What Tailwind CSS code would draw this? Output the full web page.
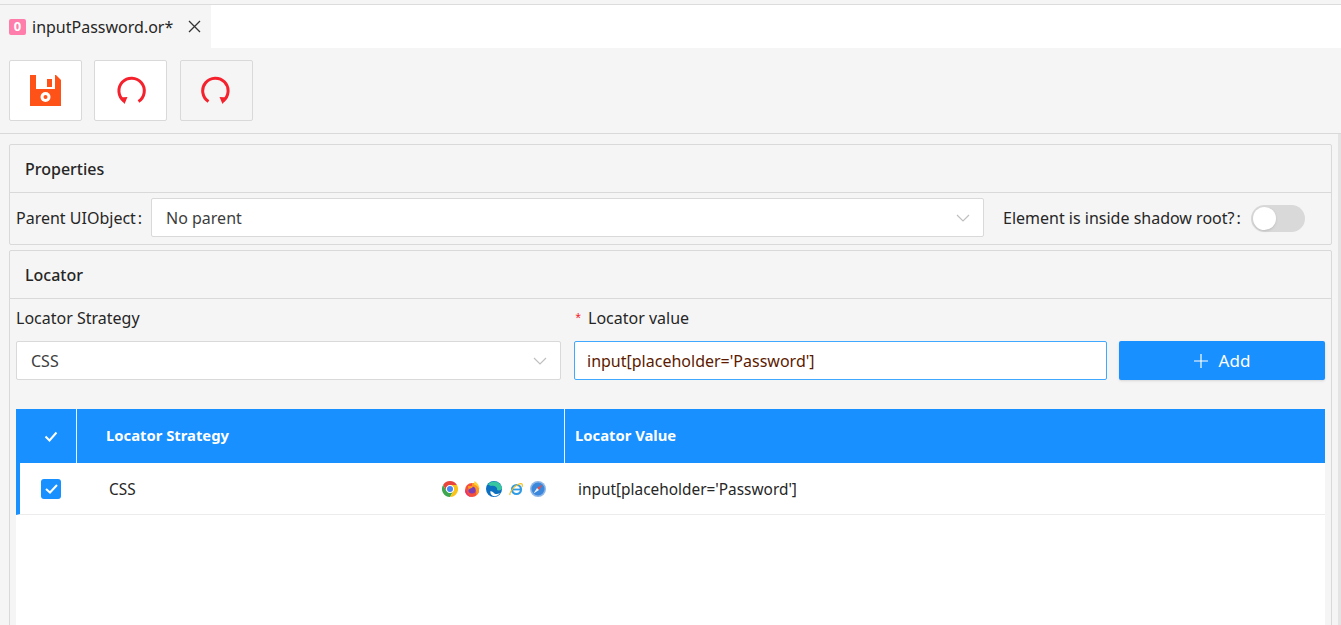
<!DOCTYPE html>
<html lang="en">
<head>
  <meta charset="UTF-8" />
  <title>inputPassword.or</title>
  <script src="https://cdn.jsdelivr.net/npm/@tailwindcss/browser@4"></script>
</head>
<body class="bg-[#f5f5f5] h-[625px] overflow-hidden font-['Noto_Sans',sans-serif] text-[16px] text-[#262626]">
  <!-- tab bar -->
  <div class="mt-[4px] border-t border-[#dcdcdc] h-[44px] flex bg-white">
    <div class="w-[211px] bg-[#f5f5f5] flex items-center pl-[9px]">
      <span class="w-[17px] h-[16px] rounded-[2px] bg-[#ff7daa] text-white text-[13px] font-bold flex items-center justify-center leading-none">0</span>
      <span class="ml-[6px] text-[16px] leading-none">inputPassword.or*</span>
      <svg class="ml-[15px]" width="13" height="13" viewBox="0 0 13 13" fill="none" stroke="#333" stroke-width="1.3"><path d="M1 1l11 11M12 1L1 12"/></svg>
    </div>
  </div>

  <!-- toolbar -->
  <div class="h-[86px] border-b border-[#d9d9d9] pt-[12px] pl-[9px] flex gap-[12px]">
    <button class="w-[73px] h-[61px] bg-white border border-[#d9d9d9] rounded-[2px] flex items-center justify-center">
      <svg width="31" height="31" viewBox="0 0 31 31"><path fill="#ff5219" d="M0 0h26l5 5v26H0z"/><path fill="#fff" d="M6 0h19v14H6z"/><path fill="#ff5219" d="M17 4h5v8h-5z"/><circle cx="15.5" cy="22" r="5" fill="#fff"/><circle cx="15.5" cy="22" r="2" fill="#ff5219"/></svg>
    </button>
    <button class="w-[73px] h-[61px] bg-white border border-[#d9d9d9] rounded-[2px] flex items-center justify-center">
      <svg width="32" height="32" viewBox="1 1 32 32" fill="none"><path stroke="#f5222d" stroke-width="3" d="M10 27A12.7 12.7 0 1 1 24.500 27.500"/><path fill="#f5222d" d="M5.500 23.500l8-.5-3 7z"/></svg>
    </button>
    <button class="ml-[1px] w-[73px] h-[61px] bg-[#f5f5f5] border border-[#d9d9d9] rounded-[2px] flex items-center justify-center">
      <svg width="32" height="32" viewBox="-1 1 32 32" fill="none"><path stroke="#f5222d" stroke-width="3" d="M21 27A12.7 12.7 0 1 0 6.500 27.500"/><path fill="#f5222d" d="M25.500 23.500l-8-.5 3 7z"/></svg>
    </button>
  </div>

  <main class="pl-[9px] pr-[6px] pt-[10px] border-r-[3px] border-[#e4e4e4] h-[492px]">
    <!-- properties -->
    <section class="border border-[#d9d9d9] rounded-[2px] h-[101px]">
      <h2 class="h-[48px] border-b border-[#d9d9d9] pl-[15px] flex items-center font-medium text-[16px]">Properties</h2>
      <div class="flex items-start pl-[6px] pt-[5px]">
        <label class="w-[135px] h-[39px] flex items-center whitespace-nowrap">Parent UIObject<span class="ml-[2px]">:</span></label>
        <div class="w-[833px] h-[39px] bg-white border border-[#d9d9d9] rounded-[2px] flex items-center justify-between pl-[14px] pr-[13px] text-[#3d3d3d]">
          No parent
          <svg width="14" height="8" viewBox="0 0 14 8" fill="none" stroke="#bfbfbf" stroke-width="1.2"><path d="M1 1l6 6 6-6"/></svg>
        </div>
        <label class="ml-[19px] w-[248px] h-[39px] flex items-center whitespace-nowrap">Element is inside shadow root?<span class="ml-[2px]">:</span></label>
        <span class="mt-[7px] w-[54px] h-[27px] rounded-full bg-[#d9d9d9] flex items-center pl-[2px]">
          <span class="w-[23px] h-[23px] rounded-full bg-white shadow"></span>
        </span>
      </div>
    </section>

    <!-- locator -->
    <section class="mt-[5px] border border-[#d9d9d9] rounded-t-[2px] h-[400px]">
      <h2 class="h-[48px] border-b border-[#d9d9d9] pl-[15px] flex items-center font-medium text-[16px]">Locator</h2>
      <div class="pl-[6px] pr-[6px]">
        <div class="flex pt-[8px]">
          <div class="w-[545px] shrink-0">
            <label class="block h-[34px] leading-[22px]">Locator Strategy</label>
            <div class="h-[39px] bg-white border border-[#d9d9d9] rounded-[2px] flex items-center justify-between pl-[14px] pr-[13px] text-[#3d3d3d]">
              CSS
              <svg width="14" height="8" viewBox="0 0 14 8" fill="none" stroke="#bfbfbf" stroke-width="1.2"><path d="M1 1l6 6 6-6"/></svg>
            </div>
          </div>
          <div class="ml-[13px] w-[533px] shrink-0">
            <label class="block h-[34px] leading-[22px]"><span class="inline-block w-[14px] text-[#f5222d] font-['Liberation_Mono',monospace] text-[14px]">*</span>Locator value</label>
            <div class="h-[39px] bg-white border border-[#40a9ff] rounded-[2px]">
              <input class="w-full h-full pl-[12px] text-[#5c1a00] outline-none" value="input[placeholder='Password']" />
            </div>
          </div>
          <button class="ml-[12px] mt-[34px] w-[206px] h-[39px] shrink-0 bg-[#1890ff] text-white text-[17px] rounded-[2px] shadow-sm flex items-center justify-center gap-[11px]">
            <svg width="14" height="14" viewBox="0 0 14 14" stroke="#fff" stroke-width="1.2"><path d="M7 0v14M0 7h14"/></svg>
            Add
          </button>
        </div>

        <!-- locators table -->
        <div class="mt-[29px] bg-white h-[230px]">
          <div class="h-[54px] pb-[2px] bg-[#1890ff] text-white font-bold text-[14.8px] flex">
            <div class="w-[61px] -mb-[2px] border-r border-[#e6f4ff] flex items-center justify-center pl-[10px]">
              <svg width="14" height="11" viewBox="0 0 14 11" fill="none" stroke="#fff" stroke-width="2"><path d="M1.5 5.5l4 4 7-8"/></svg>
            </div>
            <div class="w-[488px] -mb-[2px] pb-[2px] border-r border-[#e6f4ff] flex items-center pl-[29px]">Locator Strategy</div>
            <div class="flex-1 flex items-center pl-[10px]">Locator Value</div>
          </div>
          <div class="h-[52px] flex items-center border-b border-[#ececec] border-l-[4px] border-l-[#1890ff] text-[15.4px]">
            <div class="w-[62px] flex items-center justify-center">
              <span class="w-[20px] h-[20px] rounded-[3px] bg-[#1890ff] flex items-center justify-center">
                <svg width="13" height="10" viewBox="0 0 13 10" fill="none" stroke="#fff" stroke-width="2"><path d="M1 5l4 3.500L12 1"/></svg>
              </span>
            </div>
            <div class="w-[483px] pl-[27px] pt-[2px] flex items-center justify-between pr-[19px]">
              <span>CSS</span>
              <span class="flex gap-[6px]">
                <svg width="16" height="16" viewBox="0 0 16 16"><path fill="#e8453c" d="M8 0a8 8 0 0 1 6.930 4H8a4 4 0 0 0-3.460 6L1.070 4A8 8 0 0 1 8 0z"/><path fill="#3ea64f" d="M1.070 4A8 8 0 0 0 8 16l3.460-6a4 4 0 0 1-6.920 0z"/><path fill="#f9c31a" d="M14.930 4H8a4 4 0 0 1 3.460 6L8 16a8 8 0 0 0 6.930-12z"/><circle cx="8" cy="8" r="3.800" fill="#fff"/><circle cx="8" cy="8" r="3" fill="#4587f3"/></svg>
                <svg width="16" height="16" viewBox="0 0 16 16"><circle cx="8" cy="9" r="7" fill="#f4503c"/><path fill="#ff9a1f" d="M8 2c4 0 7 3 7 7 0 2-1 4-3 5 1-3 0-7-4-8z"/><path fill="#ffd23a" d="M10.500 0c3.500 2 5 5 5 8.500C14 5 12 4 10 3.500z"/><circle cx="8" cy="9" r="3.600" fill="#7b3fb5"/><path fill="#ff9a1f" d="M4 5h5l-1 2c-2 0-3 1-3.500 2z"/><path fill="#e8326e" d="M1 9c0 4 3 7 7 7-3-1-5-3-5-6z"/></svg>
                <svg width="16" height="16" viewBox="0 0 16 16"><circle cx="8" cy="8" r="8" fill="#0c6fc0"/><path fill="#36c6a0" d="M2 3.500C5-1 14-1 16 7c0 2-3 3-5 2 1-3-3-5-6-4z"/><path fill="#fff" d="M7 11c1 2 4 3 7 1-2 3-5 3.500-7 3-2-1-3-3-2.500-5z"/></svg>
                <svg width="16" height="16" viewBox="0 0 16 16" fill="none"><circle cx="8.500" cy="8.500" r="4.500" stroke="#2f9be6" stroke-width="2.200"/><path stroke="#2f9be6" stroke-width="1.800" d="M4 8.500h9"/><path stroke="#f2c01f" stroke-width="1.200" d="M2 14c-1-2 4-9 9-11 3-1 4 0 3 3"/></svg>
                <svg width="16" height="16" viewBox="0 0 16 16"><circle cx="8" cy="8" r="8" fill="#8fb6e6"/><circle cx="8" cy="8" r="6.500" fill="#3a87dc"/><path fill="#f24a3d" d="M12.500 3.500 7 7l2 2z"/><path fill="#eef3fa" d="M3.500 12.500 7 7l2 2z"/></svg>
              </span>
            </div>
            <div class="pl-[13px] pt-[2px]">input[placeholder='Password']</div>
          </div>
        </div>
      </div>
    </section>
  </main>
</body>
</html>
